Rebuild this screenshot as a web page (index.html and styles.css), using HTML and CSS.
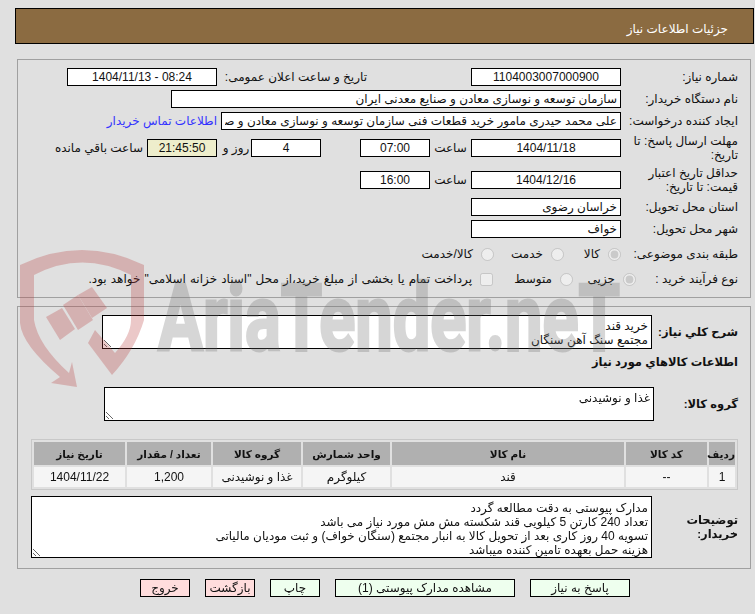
FILE: index.html
```html
<!DOCTYPE html>
<html lang="fa">
<head>
  <meta charset="utf-8">
  <title>جزئیات اطلاعات نیاز</title>
  <link rel="stylesheet" href="styles.css">
</head>
<body dir="rtl">
  <div class="title-bar">جزئیات اطلاعات نیاز</div>

  <div class="panel panel-info">
    <div class="row">
      <div class="label">شماره نیاز:</div>
      <div class="field w150 center">1104003007000900</div>
      <div class="label label-announce">تاریخ و ساعت اعلان عمومی:</div>
      <div class="field w150 center" dir="ltr">1404/11/13 - 08:24</div>
    </div>
    <div class="row">
      <div class="label">نام دستگاه خریدار:</div>
      <input class="field w450" readonly value="سازمان توسعه و نوسازی معادن و صنایع معدنی ایران">
    </div>
    <div class="row">
      <div class="label">ایجاد کننده درخواست:</div>
      <input class="field w400" readonly value="علی محمد حیدری مامور خرید قطعات فنی سازمان توسعه و نوسازی معادن و صنایع معدنی ایران">
      <a class="contact" href="#">اطلاعات تماس خریدار</a>
    </div>
    <div class="row row-tall">
      <div class="label">مهلت ارسال پاسخ: تا تاریخ:</div>
      <div class="field w150 center">1404/11/18</div>
      <div class="unit w41">ساعت</div>
      <div class="field w70 center">07:00</div>
      <div class="spacer"></div>
      <div class="field w70 center">4</div>
      <div class="unit w30">روز و</div>
      <div class="field w70 center timer">21:45:50</div>
      <div class="unit remain">ساعت باقي مانده</div>
    </div>
    <div class="row row-tall">
      <div class="label">حداقل تاریخ اعتبار قیمت: تا تاریخ:</div>
      <div class="field w150 center">1404/12/16</div>
      <div class="unit w41">ساعت</div>
      <div class="field w70 center">16:00</div>
    </div>
    <div class="row">
      <div class="label">استان محل تحویل:</div>
      <div class="field w150">خراسان رضوی</div>
    </div>
    <div class="row">
      <div class="label">شهر محل تحویل:</div>
      <div class="field w150">خواف</div>
    </div>
    <div class="row row-options row-category">
      <div class="label">طبقه بندی موضوعی:</div>
      <label class="option w57"><input type="radio" name="cat" checked disabled>کالا</label>
      <label class="option w70"><input type="radio" name="cat" disabled>خدمت</label>
      <label class="option"><input type="radio" name="cat" disabled>کالا/خدمت</label>
    </div>
    <div class="row row-options row-process">
      <div class="label label-process">نوع فرآیند خرید :</div>
      <label class="option w63"><input type="radio" name="proc" checked disabled>جزیی</label>
      <label class="option w80"><input type="radio" name="proc" disabled>متوسط</label>
      <label class="option option-long"><input type="checkbox" disabled>پرداخت تمام یا بخشی از مبلغ خرید،از محل "اسناد خزانه اسلامی" خواهد بود.</label>
    </div>
  </div>

  <div class="panel panel-goods">
    <div class="row row-summary">
      <div class="label bold w86">شرح کلي نياز:</div>
      <textarea class="box w550 h34" readonly>خرید قند
مجتمع سنگ آهن سنگان</textarea>
    </div>
    <div class="goods-title bold">اطلاعات کالاهاي مورد نياز</div>
    <div class="row row-group">
      <div class="label bold w84">گروه کالا:</div>
      <textarea class="box w550 h34" readonly>غذا و نوشیدنی</textarea>
    </div>
    <table class="goods">
      <tr>
        <th class="c1">ردیف</th>
        <th class="c2">کد کالا</th>
        <th class="c3">نام کالا</th>
        <th class="c4">واحد شمارش</th>
        <th class="c5">گروه کالا</th>
        <th class="c6">تعداد / مقدار</th>
        <th class="c7">تاریخ نیاز</th>
      </tr>
      <tr>
        <td>1</td>
        <td>--</td>
        <td>قند</td>
        <td>کیلوگرم</td>
        <td>غذا و نوشیدنی</td>
        <td>1,200</td>
        <td>1404/11/22</td>
      </tr>
    </table>
    <div class="row row-notes">
      <div class="label bold w86">توضیحات<br>خریدار:</div>
      <textarea class="box notes" readonly>مدارک پیوستی به دقت مطالعه گردد
تعداد 240 کارتن 5 کیلویی قند شکسته مش مش مورد نیاز می باشد
تسویه 40 روز کاری بعد از تحویل کالا به انبار مجتمع (سنگان خواف) و ثبت مودیان مالیاتی
هزینه حمل بعهده تامین کننده میباشد</textarea>
    </div>
  </div>

  <div class="buttons">
    <button class="btn green w100">پاسخ به نیاز</button>
    <button class="btn green w180">مشاهده مدارک پیوستی (1)</button>
    <button class="btn green w50">چاپ</button>
    <button class="btn red w50">بازگشت</button>
    <button class="btn red w50">خروج</button>
  </div>

  <svg class="watermark" width="755" height="400" viewBox="0 0 755 400" aria-hidden="true">
    <g fill="#b83a3a">
      <path fill-rule="evenodd" d="M20 265Q82 235 144 265L144 320Q135 350 112 375L88 343L95 330L115 353Q131 335 131 320L131 275Q82 250 34 275L34 320Q38 345 69 373L72 362L77 387L51 383L60 377Q22 345 20 323Z"/>
      <path d="M46 317L62 308L75 329L60 340Z"/>
      <path d="M63 305L78 295L93 320L78 330Z"/>
      <path d="M78 295L92 287L107 308L92 318Z"/>
    </g>
    <text class="wm-text" x="158" y="350" textLength="462" lengthAdjust="spacingAndGlyphs">AriaTender.neT</text>
  </svg>
</body>
</html>
```

FILE: styles.css
```css
* {
  box-sizing: border-box;
}

html, body {
  margin: 0;
  height: 614px;
  overflow: hidden;
}

body {
  position: relative;
  background-color: #e0e0e0;
  color: #111;
  font-family: "Liberation Sans", "DejaVu Sans", sans-serif;
  font-size: 12px;
  line-height: 14px;
}

.title-bar {
  margin: 8px 1px 0 0;
  width: 739px;
  height: 36px;
  padding: 13px 25px 0 0;
  background-color: #8b6b41;
  border: 1px solid #000;
  color: #fff;
  font-size: 12px;
}

.panel {
  margin-right: 4px;
  width: 734px;
  padding: 0 12px;
  border: 1px solid #a0a0a0;
}

.panel-info {
  margin-top: 15px;
  height: 239px;
  padding-top: 8px;
}

.panel-goods {
  margin-top: 8px;
  height: 263px;
  padding-top: 8px;
}

.row {
  display: flex;
  align-items: center;
  min-height: 18px;
  margin-bottom: 4px;
}

.row-tall {
  height: 28px;
}

.row-category {
  margin-top: 7px;
  margin-bottom: 7px;
}

.label {
  flex: none;
  width: 117px;
}

.label-announce {
  width: 145px;
  margin-right: 104px;
  margin-left: 5px;
  white-space: nowrap;
}

.label-process {
  width: 102px;
}

.bold {
  font-weight: bold;
  font-size: 11.5px;
}

.field {
  flex: none;
  height: 18px;
  padding: 1px 3px;
  background-color: #fff;
  border: 1px solid #000;
  color: #111;
  font: inherit;
  outline: none;
}

.center {
  text-align: center;
}

.timer {
  background-color: #eeeecc;
}

.unit {
  flex: none;
  text-align: center;
}

.remain {
  margin-right: 4px;
}

.spacer {
  flex: none;
  width: 39px;
}

.contact {
  margin-right: 4px;
  color: #3333ff;
  text-decoration: none;
}

.option {
  display: flex;
  flex: none;
  align-items: center;
  gap: 8px;
}

.option-long {
  word-spacing: 0.8px;
}

.option input {
  margin: 0;
  flex: none;
}

.box {
  display: block;
  flex: none;
  padding: 3px;
  background-color: #fff;
  border: 1px solid #000;
  color: #111;
  font: inherit;
  outline: none;
}

.notes {
  width: 621px;
  height: 62px;
  padding: 4px 3px 0;
  overflow: hidden;
}

.row-summary {
  margin-bottom: 6px;
}

.goods-title {
  height: 16px;
  margin-bottom: 16px;
  margin-top: 4px;
}

.row-group {
  margin-bottom: 18px;
}

.row-notes {
  margin-top: 6px;
}

.goods {
  width: 707px;
  table-layout: fixed;
  border: 1px solid #c8c8c8;
  border-spacing: 2px;
  text-align: center;
}

.goods th {
  height: 23px;
  padding: 0;
  background-color: #b0b0b0;
  font-size: 10.5px;
}

.goods td {
  height: 20px;
  padding: 0;
  background-color: #f5f5f5;
}

.buttons {
  display: flex;
  gap: 15px;
  margin: 10px 125px 0 0;
}

.btn {
  flex: none;
  height: 18px;
  padding: 0;
  border: 1px solid #000;
  color: #111;
  font: inherit;
}

.green {
  background-color: #eeffee;
}

.red {
  background-color: #ffdddd;
}

.watermark {
  position: absolute;
  top: 0;
  left: 0;
  pointer-events: none;
  opacity: 0.28;
  direction: ltr;
}

.wm-text {
  fill: #6e6e6e;
  stroke: #6e6e6e;
  stroke-width: 3px;
  font-family: "Roboto", sans-serif;
  font-size: 92px;
  font-weight: bold;
}

.w30 { width: 30px; margin-left: 4px; }
.w41 { width: 41px; }
.w50 { width: 50px; }
.w57 { width: 57px; }
.w63 { width: 63px; }
.w70 { width: 70px; }
.w80 { width: 80px; }
.w84 { width: 84px; }
.w86 { width: 86px; }
.w100 { width: 100px; }
.w150 { width: 150px; }
.w180 { width: 180px; }
.w400 { width: 400px; }
.w450 { width: 450px; }
.w550 { width: 550px; }
.h34 { height: 34px; }
.c1 { width: 26px; }
.c2 { width: 81px; }
.c3 { width: 232px; }
.c4 { width: 87px; }
.c5 { width: 88px; }
.c6 { width: 84px; }
.c7 { width: 91px; }
```
